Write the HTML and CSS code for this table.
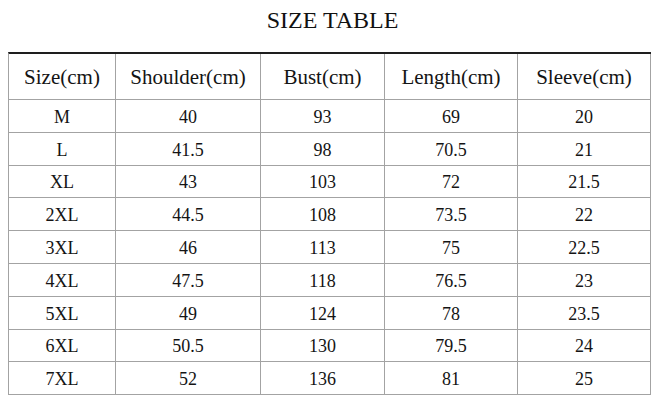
FILE: index.html
```html
<!DOCTYPE html>
<html>
<head>
<meta charset="utf-8">
<link rel="stylesheet" href="styles.css">
</head>
<body>
<div class="page">
  <h1 class="title">SIZE TABLE</h1>
  <table class="size-table">
    <colgroup>
      <col class="c1"><col class="c2"><col class="c3"><col class="c4"><col class="c5">
    </colgroup>
    <thead>
      <tr><th>Size(cm)</th><th>Shoulder(cm)</th><th>Bust(cm)</th><th>Length(cm)</th><th>Sleeve(cm)</th></tr>
    </thead>
    <tbody>
      <tr><td>M</td><td>40</td><td>93</td><td>69</td><td>20</td></tr>
      <tr><td>L</td><td>41.5</td><td>98</td><td>70.5</td><td>21</td></tr>
      <tr><td>XL</td><td>43</td><td>103</td><td>72</td><td>21.5</td></tr>
      <tr><td>2XL</td><td>44.5</td><td>108</td><td>73.5</td><td>22</td></tr>
      <tr><td>3XL</td><td>46</td><td>113</td><td>75</td><td>22.5</td></tr>
      <tr><td>4XL</td><td>47.5</td><td>118</td><td>76.5</td><td>23</td></tr>
      <tr><td>5XL</td><td>49</td><td>124</td><td>78</td><td>23.5</td></tr>
      <tr><td>6XL</td><td>50.5</td><td>130</td><td>79.5</td><td>24</td></tr>
      <tr><td>7XL</td><td>52</td><td>136</td><td>81</td><td>25</td></tr>
    </tbody>
  </table>
</div>
</body>
</html>
```
FILE: styles.css
```css
html, body {
  margin: 0;
  padding: 0;
  background: #ffffff;
}

.page {
  padding: 6px 0 0 8px;
  font-family: "Liberation Serif", "Times New Roman", serif;
  color: #141414;
}

.title {
  margin: 0 0 18px 0;
  padding-left: 3px;
  width: 643px;
  text-align: center;
  font-family: "Liberation Serif", serif;
  font-size: 24px;
  line-height: 28px;
  font-weight: normal;
  color: #111;
}

.size-table {
  table-layout: fixed;
  width: 643px;
  border-collapse: separate;
  border-spacing: 0;
  border-top: 2px solid #1e1e1e;
  border-left: 1px solid #a3a3a3;
  font-family: "Liberation Serif", serif;
}

.c1 { width: 107px; }
.c2 { width: 145px; }
.c3 { width: 124px; }
.c4 { width: 133px; }
.c5 { width: 133px; }

.size-table th,
.size-table td {
  box-sizing: border-box;
  padding: 0;
  text-align: center;
  border-right: 1px solid #a3a3a3;
  border-bottom: 1px solid #a3a3a3;
  font-family: "Liberation Serif", serif;
  font-weight: normal;
  color: #141414;
}

.size-table th {
  height: 46px;
  font-size: 21px;
  padding-top: 1px;
}

.size-table td {
  height: 32.8px;
  font-size: 18px;
  padding-top: 3px;
}
```
